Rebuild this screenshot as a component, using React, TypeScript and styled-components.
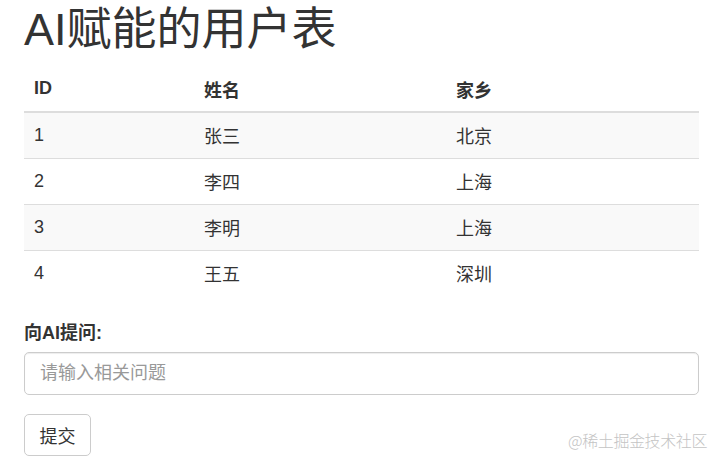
import styled, { createGlobalStyle } from 'styled-components';

const GlobalStyle = createGlobalStyle`
  html, body {
    margin: 0;
    padding: 0;
    background: #fff;
  }
  body {
    font-family: 'Liberation Sans', 'Noto Sans CJK SC', sans-serif;
    font-size: 18px;
    color: #333;
  }
  * {
    box-sizing: border-box;
  }
`;

const Page = styled.div`
  position: relative;
  width: 712px;
  height: 462px;
  padding: 0 13px 0 24px;
  overflow: hidden;
`;

const Title = styled.h1`
  margin: 0;
  padding-top: 5px;
  font-size: 45px;
  font-weight: 400;
  line-height: 50px;
  color: #333;
`;

const Table = styled.table`
  width: 675px;
  margin-top: 11px;
  border-collapse: collapse;
  border-spacing: 0;
`;

const HeadCell = styled.th<{ $width: number }>`
  width: ${(p) => p.$width}px;
  height: 46px;
  padding: 0 10px;
  text-align: left;
  font-weight: 700;
  vertical-align: middle;
  border-bottom: 2px solid #ddd;
`;

const Row = styled.tr<{ $striped: boolean }>`
  background: ${(p) => (p.$striped ? '#f9f9f9' : '#fff')};
`;

const Cell = styled.td`
  height: 46px;
  padding: 0 10px;
  vertical-align: middle;
  border-top: 1px solid #ddd;
`;

const Form = styled.form`
  display: flex;
  flex-direction: column;
  align-items: flex-start;
  margin-top: 24px;
`;

const Label = styled.label`
  font-weight: 700;
  line-height: 26px;
  margin-bottom: 6px;
`;

const Input = styled.input`
  width: 675px;
  height: 43px;
  padding: 0 15px;
  font-family: inherit;
  font-size: 18px;
  color: #555;
  border: 1px solid #ccc;
  border-radius: 5px;
  box-shadow: inset 0 1px 1px rgba(0, 0, 0, 0.075);
  outline: none;

  &::placeholder {
    color: #999;
  }
`;

const Button = styled.button`
  margin-top: 19px;
  height: 42px;
  width: 67px;
  padding: 0;
  font-family: inherit;
  font-size: 18px;
  color: #333;
  background: #fff;
  border: 1px solid #ccc;
  border-radius: 5px;
  cursor: pointer;
`;

const Watermark = styled.div`
  position: absolute;
  right: 5px;
  bottom: 10px;
  font-family: 'Noto Sans CJK SC', sans-serif;
  font-size: 16px;
  font-weight: 300;
  color: #c4c4c4;
  letter-spacing: -0.4px;
`;

const users = [
  { id: 1, name: '张三', hometown: '北京' },
  { id: 2, name: '李四', hometown: '上海' },
  { id: 3, name: '李明', hometown: '上海' },
  { id: 4, name: '王五', hometown: '深圳' },
];

export default function App() {
  return (
    <>
      <GlobalStyle />
      <Page>
        <Title>AI赋能的用户表</Title>
        <Table>
          <thead>
            <tr>
              <HeadCell $width={170}>ID</HeadCell>
              <HeadCell $width={252}>姓名</HeadCell>
              <HeadCell $width={253}>家乡</HeadCell>
            </tr>
          </thead>
          <tbody>
            {users.map((u, i) => (
              <Row key={u.id} $striped={i % 2 === 0}>
                <Cell>{u.id}</Cell>
                <Cell>{u.name}</Cell>
                <Cell>{u.hometown}</Cell>
              </Row>
            ))}
          </tbody>
        </Table>
        <Form onSubmit={(e) => e.preventDefault()}>
          <Label htmlFor="question">向AI提问:</Label>
          <Input id="question" placeholder="请输入相关问题" />
          <Button type="submit">提交</Button>
        </Form>
        <Watermark>@稀土掘金技术社区</Watermark>
      </Page>
    </>
  );
}
